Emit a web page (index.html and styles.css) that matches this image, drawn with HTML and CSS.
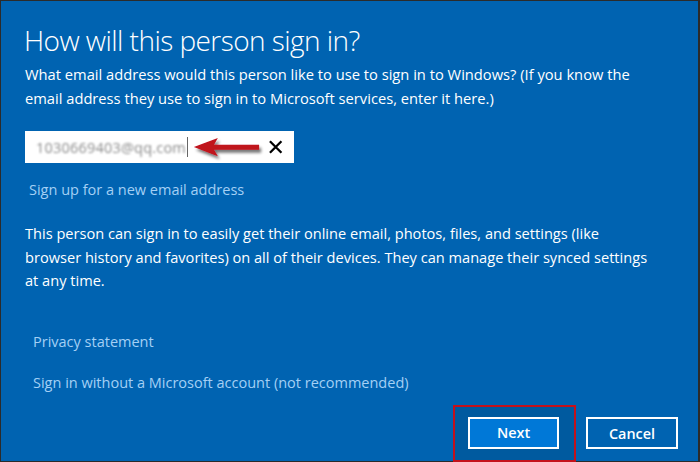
FILE: index.html
```html
<!DOCTYPE html>
<html>
<head>
<meta charset="utf-8">
<link rel="stylesheet" href="styles.css">
</head>
<body>
<div class="window">
  <h1 class="title">How will this person sign in?</h1>
  <p class="intro">What email address would this person like to use to sign in to Windows? (If you know the<br>email address they use to sign in to Microsoft services, enter it here.)</p>
  <div class="field">
    <span class="email">1030669403@qq.com</span>
    <span class="caret"></span>
    <svg class="arrow" width="80" height="30" viewBox="0 0 80 30">
      <defs>
        <filter id="sh" x="-20%" y="-50%" width="140%" height="200%">
          <feGaussianBlur in="SourceAlpha" stdDeviation="1.6"/>
          <feOffset dx="2" dy="3" result="b"/>
          <feComponentTransfer><feFuncA type="linear" slope="0.55"/></feComponentTransfer>
          <feMerge><feMergeNode/><feMergeNode in="SourceGraphic"/></feMerge>
        </filter>
      </defs>
      <g filter="url(#sh)">
        <path d="M3 13 L28 3.5 L24 10.6 L71 10.6 L71 15.8 L24 15.8 L28 22.5 Z" fill="#c0121c"/>
      </g>
    </svg>
    <svg class="clear" width="16" height="16" viewBox="0 0 16 16">
      <path d="M2 2 L14 14 M14 2 L2 14" stroke="#000" stroke-width="2.4" fill="none"/>
    </svg>
  </div>
  <a class="link signup">Sign up for a new email address</a>
  <p class="info">This person can sign in to easily get their online email, photos, files, and settings (like<br>browser history and favorites) on all of their devices. They can manage their synced settings<br>at any time.</p>
  <a class="link privacy">Privacy statement</a>
  <a class="link nomsa">Sign in without a Microsoft account (not recommended)</a>
  <div class="actions">
    <div class="highlight"><button class="btn primary">Next</button></div>
    <button class="btn">Cancel</button>
  </div>
</div>
</body>
</html>
```
FILE: styles.css
```css
* { box-sizing: border-box; }
html, body { margin: 0; padding: 0; }
body { width: 700px; height: 462px; overflow: hidden; background: #2b2b2b; }
.window {
  width: 700px;
  height: 462px;
  background: #0063b1;
  border-left: 1px solid #2b2b2b;
  border-top: 1px solid #2b2b2b;
  border-right: 2px solid #2b2b2b;
  border-bottom: 1px solid #2b2b2b;
  color: #fff;
  font-family: "Open Sans", "Noto Sans", sans-serif;
  padding: 0 0 0 23px;
  display: flex;
  flex-direction: column;
  align-items: flex-start;
}
.title {
  font-weight: 300;
  font-size: 28px;
  line-height: 36px;
  margin: 21px 0 0 0;
  letter-spacing: -0.55px;
}
.intro {
  font-size: 14.7px;
  line-height: 24px;
  margin: 4px 0 0 1px;
  white-space: nowrap;
}
.field {
  margin: 21px 0 0 1px;
  width: 269px;
  height: 32px;
  background: #fff;
  display: flex;
  align-items: center;
  position: relative;
  padding: 0 11px 0 11px;
}
.email {
  color: #8a8a8a;
  font-size: 14.5px;
  filter: blur(1.2px);
  letter-spacing: 0.2px;
}
.caret {
  width: 1px;
  height: 20px;
  background: #666;
  margin-left: 1px;
}
.arrow { margin-left: 3px; margin-top: 4px; }
.clear { margin-left: auto; }
.link {
  color: #a4d0f5;
  font-size: 14.5px;
  line-height: 22px;
}
.signup { margin: 16px 0 0 5px; }
.info {
  font-size: 14.6px;
  line-height: 23.5px;
  margin: 21px 0 0 1px;
  white-space: nowrap;
}
.privacy { margin: 38px 0 0 9px; }
.nomsa { margin: 19px 0 0 9px; }
.actions {
  align-self: flex-end;
  margin: 11px 0 0 0;
  margin-right: 20px;
  display: flex;
  align-items: center;
  gap: 10px;
}
.highlight {
  border: 2px solid #c4111b;
  padding: 10px 15px 11px 13px;
  background: #005a9f;
}
.btn {
  height: 32px;
  width: 92px;
  border: 2px solid #fff;
  background: #0063b1;
  color: #fff;
  font-family: "Open Sans", "Noto Sans", sans-serif;
  font-weight: 600;
  font-size: 14.4px;
  padding: 0;
}
.btn.primary { background: #0078d7; width: 91px; }
```
